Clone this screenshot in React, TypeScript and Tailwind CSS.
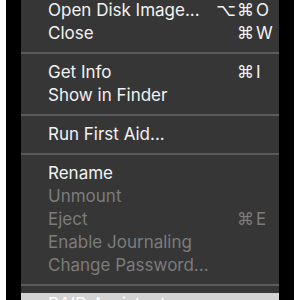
import React from "react";

type Item =
  | { kind: "item"; label: string; mods?: string; keyChar?: string; disabled?: boolean; selected?: boolean }
  | { kind: "sep" };

const items: Item[] = [
  { kind: "item", label: "Open Disk Image...", mods: "⌥⌘", keyChar: "O" },
  { kind: "item", label: "Close", mods: "⌘", keyChar: "W" },
  { kind: "sep" },
  { kind: "item", label: "Get Info", mods: "⌘", keyChar: "I" },
  { kind: "item", label: "Show in Finder" },
  { kind: "sep" },
  { kind: "item", label: "Run First Aid..." },
  { kind: "sep" },
  { kind: "item", label: "Rename" },
  { kind: "item", label: "Unmount", disabled: true },
  { kind: "item", label: "Eject", mods: "⌘", keyChar: "E", disabled: true },
  { kind: "item", label: "Enable Journaling", disabled: true },
  { kind: "item", label: "Change Password...", disabled: true },
  { kind: "sep" },
  { kind: "item", label: "RAID Assistant...", selected: true },
];

export default function App() {
  return (
    <div className="w-[300px] h-[300px] overflow-hidden bg-white px-[6px] font-['Inter','DejaVu_Sans',sans-serif]">
      <div className="h-full bg-black px-[15px]">
        <div className="h-full overflow-hidden bg-[#363636]">
          <div className="-mt-[1px]">
            {items.map((it, i) =>
              it.kind === "sep" ? (
                <div key={i} className="my-[7px] h-[2px] bg-[#5a5a5a]" />
              ) : (
                <div
                  key={i}
                  className={`flex h-[23px] items-center pl-[27px] text-[17px] leading-[23px] ${
                    it.selected ? "bg-[#d3d3d3] text-white" : it.disabled ? "text-[#7c7c7c]" : "text-[#f2f2f2]"
                  }`}
                >
                  <span className="flex-1 whitespace-nowrap">{it.label}</span>
                  <span className="w-[40px] text-right font-['DejaVu_Sans',sans-serif] text-[17px] tracking-[1px]">{it.mods}</span>
                  <span className="w-[24px] pl-[1px] text-left">{it.keyChar}</span>
                </div>
              )
            )}
          </div>
        </div>
      </div>
    </div>
  );
}
